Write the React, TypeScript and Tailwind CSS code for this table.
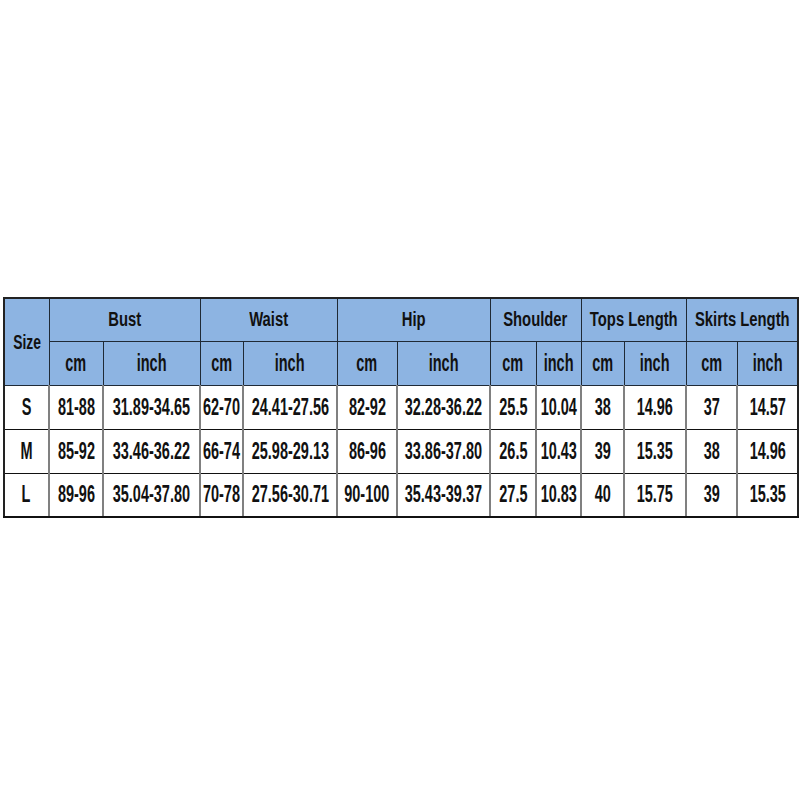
import React from "react";

const cols = [45, 54, 97, 43, 94, 60, 93, 46, 45, 43, 62, 51, 61];

const groups = ["Bust", "Waist", "Hip", "Shoulder", "Tops Length", "Skirts Length"];

const rows = [
  ["S", "81-88", "31.89-34.65", "62-70", "24.41-27.56", "82-92", "32.28-36.22", "25.5", "10.04", "38", "14.96", "37", "14.57"],
  ["M", "85-92", "33.46-36.22", "66-74", "25.98-29.13", "86-96", "33.86-37.80", "26.5", "10.43", "39", "15.35", "38", "14.96"],
  ["L", "89-96", "35.04-37.80", "70-78", "27.56-30.71", "90-100", "35.43-39.37", "27.5", "10.83", "40", "15.75", "39", "15.35"],
];

const head = "border border-[#1f2a36] bg-[#8db4e2] p-0 text-center align-middle whitespace-nowrap";
const cell = "border-y border-y-[#111] border-x-2 border-x-[#808080] p-0 text-center align-middle whitespace-nowrap";

// the picture uses a tall condensed bold face; squeeze Liberation Sans to match
const Group = ({ children }: { children: React.ReactNode }) => (
  <div className="flex justify-center text-[19.5px]">
    <span className="inline-block shrink-0 scale-x-[0.76]">{children}</span>
  </div>
);

const Tall = ({ children }: { children: React.ReactNode }) => (
  <div className="flex justify-center text-[23px]">
    <span className="inline-block shrink-0 scale-x-[0.63]">{children}</span>
  </div>
);

export default function App() {
  return (
    <div className="w-[800px] h-[800px] bg-white pt-[297px] pl-[3px]">
      <table
        className="w-[794px] table-fixed border-collapse leading-none font-bold text-[#111]"
        style={{ fontFamily: '"Liberation Sans", Arial, sans-serif' }}
      >
        <colgroup>
          {cols.map((w, i) => (
            <col key={i} style={{ width: w }} />
          ))}
        </colgroup>
        <thead>
          <tr className="h-[43px]">
            <th rowSpan={2} className={head + " border-l-2 border-t-2 border-l-[#222] border-t-[#222]"}>
              <div className="flex justify-center text-[21px]">
                <span className="inline-block shrink-0 scale-x-[0.66]">Size</span>
              </div>
            </th>
            {groups.map((g, i) => (
              <th key={g} colSpan={2} className={head + " border-t-2 border-t-[#222]" + (i === groups.length - 1 ? " border-r-2 border-r-[#222]" : "")}>
                <Group>{g}</Group>
              </th>
            ))}
          </tr>
          <tr className="h-[44px]">
            {groups.map((g, i) => (
              <React.Fragment key={g}>
                <th className={head}><Tall>cm</Tall></th>
                <th className={head + (i === groups.length - 1 ? " border-r-2 border-r-[#222]" : "")}><Tall>inch</Tall></th>
              </React.Fragment>
            ))}
          </tr>
        </thead>
        <tbody>
          {rows.map((r, ri) => (
            <tr key={ri} className="h-[44px]">
              {r.map((v, i) => (
                <td
                  key={i}
                  className={
                    cell +
                    (i === 0 ? " border-l-[#222]" : "") +
                    (i === r.length - 1 ? " border-r-[#222]" : "") +
                    (ri === rows.length - 1 ? " border-b-2 border-b-[#111]" : "")
                  }
                >
                  <Tall>{v}</Tall>
                </td>
              ))}
            </tr>
          ))}
        </tbody>
      </table>
    </div>
  );
}
